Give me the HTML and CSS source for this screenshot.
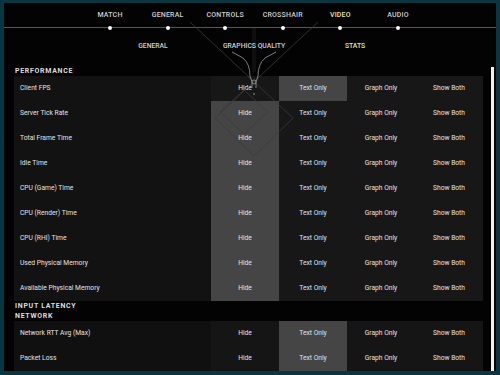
FILE: index.html
```html
<!DOCTYPE html>
<html lang="en">
<head>
    <meta charset="UTF-8">
    <title>Video - Stats</title>
    <link rel="stylesheet" href="styles.css">
</head>
<body>
    <div class="screen">
        <nav class="tabs">
            <div class="tab">MATCH</div>
            <div class="tab">GENERAL</div>
            <div class="tab">CONTROLS</div>
            <div class="tab">CROSSHAIR</div>
            <div class="tab active">VIDEO</div>
            <div class="tab">AUDIO</div>
        </nav>
        <nav class="subtabs">
            <div class="subtab">GENERAL</div>
            <div class="subtab">GRAPHICS QUALITY</div>
            <div class="subtab active">STATS</div>
        </nav>
        <div class="main">
            <div class="list">
                <div class="section">PERFORMANCE</div>
                <div class="row first">
                    <div class="label">Client FPS</div>
                    <div class="opt">Hide</div>
                    <div class="opt on">Text Only</div>
                    <div class="opt">Graph Only</div>
                    <div class="opt">Show Both</div>
                </div>
                <div class="row">
                    <div class="label">Server Tick Rate</div>
                    <div class="opt on">Hide</div>
                    <div class="opt">Text Only</div>
                    <div class="opt">Graph Only</div>
                    <div class="opt">Show Both</div>
                </div>
                <div class="row">
                    <div class="label">Total Frame Time</div>
                    <div class="opt on">Hide</div>
                    <div class="opt">Text Only</div>
                    <div class="opt">Graph Only</div>
                    <div class="opt">Show Both</div>
                </div>
                <div class="row">
                    <div class="label">Idle Time</div>
                    <div class="opt on">Hide</div>
                    <div class="opt">Text Only</div>
                    <div class="opt">Graph Only</div>
                    <div class="opt">Show Both</div>
                </div>
                <div class="row">
                    <div class="label">CPU (Game) Time</div>
                    <div class="opt on">Hide</div>
                    <div class="opt">Text Only</div>
                    <div class="opt">Graph Only</div>
                    <div class="opt">Show Both</div>
                </div>
                <div class="row">
                    <div class="label">CPU (Render) Time</div>
                    <div class="opt on">Hide</div>
                    <div class="opt">Text Only</div>
                    <div class="opt">Graph Only</div>
                    <div class="opt">Show Both</div>
                </div>
                <div class="row">
                    <div class="label">CPU (RHI) Time</div>
                    <div class="opt on">Hide</div>
                    <div class="opt">Text Only</div>
                    <div class="opt">Graph Only</div>
                    <div class="opt">Show Both</div>
                </div>
                <div class="row">
                    <div class="label">Used Physical Memory</div>
                    <div class="opt on">Hide</div>
                    <div class="opt">Text Only</div>
                    <div class="opt">Graph Only</div>
                    <div class="opt">Show Both</div>
                </div>
                <div class="row">
                    <div class="label">Available Physical Memory</div>
                    <div class="opt on">Hide</div>
                    <div class="opt">Text Only</div>
                    <div class="opt">Graph Only</div>
                    <div class="opt">Show Both</div>
                </div>
                <div class="section">INPUT LATENCY</div>
                <div class="section">NETWORK</div>
                <div class="row net">
                    <div class="label">Network RTT Avg (Max)</div>
                    <div class="opt">Hide</div>
                    <div class="opt on">Text Only</div>
                    <div class="opt">Graph Only</div>
                    <div class="opt">Show Both</div>
                </div>
                <div class="row net">
                    <div class="label">Packet Loss</div>
                    <div class="opt">Hide</div>
                    <div class="opt on">Text Only</div>
                    <div class="opt">Graph Only</div>
                    <div class="opt">Show Both</div>
                </div>
                <!-- next row, only its top edge shows above the fold -->
                <div class="row net">
                    <div class="label"></div>
                    <div class="opt on"></div>
                    <div class="opt"></div>
                    <div class="opt"></div>
                    <div class="opt"></div>
                </div>
            </div>
            <div class="scrollbar"></div>
        </div>

        <!-- decorative menu lines, drawn in page coordinates -->
        <svg class="fx" width="492" height="368" viewBox="4 3 492 368">
            <rect x="252" y="28" width="4" height="44" fill="#fff" opacity="0.05"/>
            <g stroke="#3a3a3a" stroke-width="0.8" fill="none">
                <path d="M190 22 L293 118 L254 156 L215 118 L318 22"/>
                <path d="M244 90 L268 112 L244 134 L220 112 Z"/>
            </g>
            <g stroke="#9a9a9a" stroke-width="0.8" fill="none">
                <path d="M232 52 L243 58 Q250 64 250 76 L252 82"/>
                <path d="M276 52 L265 58 Q258 64 258 76 L256 82"/>
                <path d="M252 82 L252 88 M256 82 L256 88"/>
                <circle cx="254" cy="82" r="2"/>
            </g>
            <circle cx="254" cy="94" r="0.8" fill="#aaa"/>
        </svg>
    </div>
</body>
</html>
```

FILE: styles.css
```css
body{
    margin: 0;
    padding: 3px 4px 4px 4px;
    background: #0b3640;
    font-family: Roboto, "Liberation Sans", sans-serif;
}
.screen{
    position: relative;
    width: 492px;
    height: 368px;
    background: #030303;
    overflow: hidden;
}
.tabs{
    display: flex;
    justify-content: center;
    padding-left: 8px;
    height: 24px;
    border-bottom: 1px solid #555;
}
.tab{
    position: relative;
    width: 57.6px;
    text-align: center;
    line-height: 24px;
    font-size: 7px;
    font-weight: 500;
    letter-spacing: 0.2px;
    color: #cfcfcf;
}
.tab::after{
    content: "";
    position: absolute;
    left: 50%;
    bottom: -3px;
    width: 4px;
    height: 4px;
    margin-left: -2px;
    border-radius: 50%;
    background: #fff;
}
.tab.active,
.subtab.active{
    color: #e9e3a2;
}
.subtabs{
    display: flex;
    justify-content: center;
    padding-left: 8px;
    padding-top: 13px;
    height: 25px;
}
.subtab{
    width: 101px;
    text-align: center;
    line-height: 10px;
    font-size: 6.8px;
    font-weight: 500;
    color: #cfcfcf;
}
.main{
    display: flex;
    padding-left: 10px;
}
.list{
    width: 469px;
}
.section{
    height: 10px;
    line-height: 10px;
    padding-left: 1px;
    font-size: 7px;
    font-weight: 700;
    letter-spacing: 0.7px;
    color: #dcdcdc;
}
.row{
    display: grid;
    grid-template-columns: 197px repeat(4, 68px);
    height: 25px;
    line-height: 25px;
    font-size: 6.7px;
    color: #e2e2e2;
    background: #171717;
}
.label{
    padding-left: 6px;
    background: #121212;
}
.opt{
    text-align: center;
}
.row.first .opt:first-of-type{
    background: #1c1c1c;
}
.opt.on{
    background: #454545;
}
.row.net{
    background: #151515;
}
.row.net .label{
    background: #101010;
}
.scrollbar{
    width: 3px;
    height: 304px;
    margin-top: 1px;
    margin-left: 8px;
    background: #f2f2f2;
}
.fx{
    position: absolute;
    top: 0;
    left: 0;
    pointer-events: none;
}
```
